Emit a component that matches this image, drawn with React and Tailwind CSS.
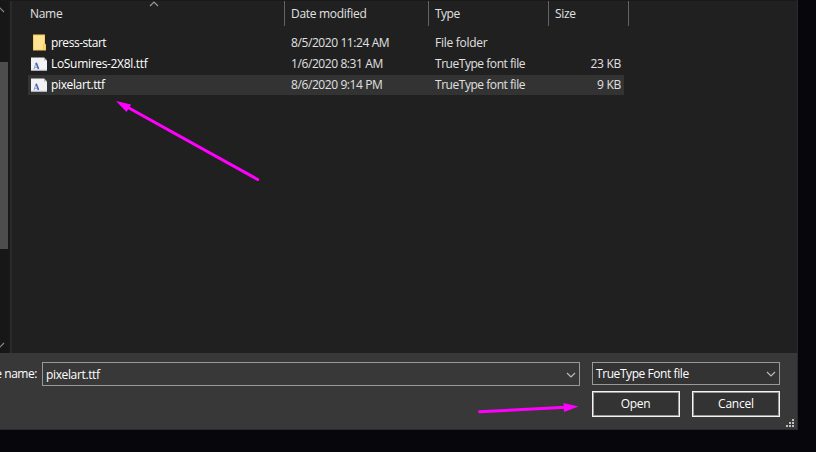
const files = [
  { name: 'press-start', date: '8/5/2020 11:24 AM', type: 'File folder', size: '', folder: true, nameClass: 'tracking-[-0.45px]' },
  { name: 'LoSumires-2X8l.ttf', date: '1/6/2020 8:31 AM', type: 'TrueType font file', size: '23 KB', nameClass: 'tracking-[-0.32px]' },
  { name: 'pixelart.ttf', date: '8/6/2020 9:14 PM', type: 'TrueType font file', size: '9 KB', selected: true, nameClass: 'tracking-[-0.36px]' },
];

function FolderIcon() {
  return (
    <svg width="16" height="18" viewBox="0 0 16 18" className="shrink-0">
      <path d="M2 0.5H14V9.5L15 10.5V16.5H2Z" fill="#f3cd60" />
      <path d="M3 1.5H13V9.5L12 10.5V15.5H3Z" fill="#ffe391" />
      <path d="M13 10.5H14V15.5H13Z" fill="#f8d978" />
    </svg>
  );
}

function FontIcon() {
  return (
    <svg width="16" height="14" viewBox="0 0 16 14" className="shrink-0">
      <path d="M0 0.5H13L16 3.5V13.5H0Z" fill="#f2f2f4" />
      <path d="M13 0.5V3.5H16Z" fill="#b9b9bd" />
      <path d="M0 12.5H16V13.5H0Z" fill="#d5d5d9" />
      <path d="M3 12L5 6M3.8 10.3H6.2" fill="none" stroke="#8fa0cc" strokeWidth="1" />
      <path d="M5.2 5.7L7.5 12" stroke="#3f62ba" strokeWidth="1.6" />
    </svg>
  );
}

function Chevron({ className }) {
  return (
    <svg width="10" height="6" viewBox="0 0 10 6" className={className}>
      <path d="M1 1L5 5L9 1" fill="none" stroke="currentColor" strokeWidth="1.2" />
    </svg>
  );
}

function Row({ file }) {
  return (
    <div className={`flex h-[21px] w-[596px] items-center pb-px ${file.selected ? 'bg-[#333333] bg-clip-content' : ''}`}>
      <div className="flex w-[263px] items-center gap-1 pl-[3px] text-white">
        {file.folder ? <FolderIcon /> : <FontIcon />}
        <span className={file.nameClass}>{file.name}</span>
      </div>
      <div className="w-36 tracking-[-0.41px]">{file.date}</div>
      <div className={`w-[120px] ${file.folder ? 'tracking-[-0.28px]' : 'tracking-[-0.46px]'}`}>{file.type}</div>
      <div className="flex-1 pr-[3px] text-right tracking-[-0.3px]">{file.size}</div>
    </div>
  );
}

export default function App() {
  return (
    <div className="relative h-[452px] w-[816px] overflow-hidden bg-[#07060c] font-['Open_Sans','Noto_Sans',sans-serif] text-[12px] leading-4 text-[#e0e0e0]">
      <div className="flex h-[430px] w-[798px] flex-col border-r border-b border-[#2b2b2b] bg-[#202020]">
        <div className="flex h-[353px] border-t border-[#191919]">
          <div className="flex w-2 flex-col bg-[#171717] text-[#8a8a8a]">
            <Chevron className="-ml-[5px] mt-1.5 shrink-0 rotate-180" />
            <div className="mt-[49px] h-[187px] bg-[#4d4d4d]" />
            <Chevron className="mt-[93px] -ml-[5px] shrink-0" />
          </div>
          <div className="w-0.5 bg-[#191919]" />
          <div className="w-0.5 bg-[#2b2b2b]" />
          <div className="flex-1 pl-4">
            <div className="flex h-[25px]">
              <div className="relative flex w-[257px] items-center border-r border-[#636363] pl-0.5 tracking-[-0.3px]">
                Name
                <Chevron className="absolute left-[121px] top-0 rotate-180 text-[#999999]" />
              </div>
              <div className="flex w-36 items-center border-r border-[#636363] pl-1.5 tracking-[-0.3px]">Date modified</div>
              <div className="flex w-[120px] items-center border-r border-[#636363] pl-1.5 tracking-[-0.5px]">Type</div>
              <div className="flex w-20 items-center border-r border-[#636363] pl-1.5 tracking-[-0.3px]">Size</div>
            </div>
            <div className="pt-[7px]">
              {files.map((f) => <Row key={f.name} file={f} />)}
            </div>
          </div>
        </div>
        <div className="flex h-[76px] bg-[#383838] pt-[9px] text-white">
          <div className="flex h-6 w-[42px] items-center justify-end whitespace-nowrap pr-[5px] tracking-[-0.45px]">e name:</div>
          <div className="flex h-6 w-[538px] items-center justify-between border border-[#999999] pl-[3px] pr-[3px]">
            <span className="pt-0.5 tracking-[-0.36px]">pixelart.ttf</span>
            <Chevron className="mt-px text-[#bbbbbb]" />
          </div>
          <div className="ml-3 flex w-[188px] flex-col gap-1.5">
            <div className="flex h-[23px] items-center justify-between border border-[#999999] bg-[#333333] pl-[3px] pr-[3px]">
              <span className="tracking-[-0.43px]">TrueType Font file</span>
              <Chevron className="text-[#bbbbbb]" />
            </div>
            <div className="flex gap-3">
              <button className="h-[26px] w-[88px] border border-[#f4f4f4] bg-[#333333] pr-px shadow-[inset_0_0_0_1px_#999999] tracking-[-0.35px]">Open</button>
              <button className="h-[26px] w-[88px] border border-[#f4f4f4] bg-[#333333] shadow-[inset_0_0_0_1px_#999999] tracking-[-0.2px]">Cancel</button>
            </div>
          </div>
          <svg width="8" height="8" viewBox="0 0 8 8" className="mb-[2px] ml-1.5 self-end" fill="#bfbfbf">
            <path d="M6 0h2v2H6zM3 3h2v2H3zM6 3h2v2H6zM0 6h2v2H0zM3 6h2v2H3zM6 6h2v2H6z" />
          </svg>
        </div>
      </div>
      <svg width="816" height="452" className="pointer-events-none absolute inset-0" fill="#ff00ff" stroke="#ff00ff">
        <path d="M128 107.5L257.7 179.5" strokeWidth="3" strokeLinecap="round" />
        <path d="M116 101L131 104.5L126.5 112Z" stroke="none" />
        <path d="M479.5 411.7L566 407.3" strokeWidth="3" strokeLinecap="round" />
        <path d="M578.5 406.5L563.5 403L564 412Z" stroke="none" />
      </svg>
    </div>
  );
}
